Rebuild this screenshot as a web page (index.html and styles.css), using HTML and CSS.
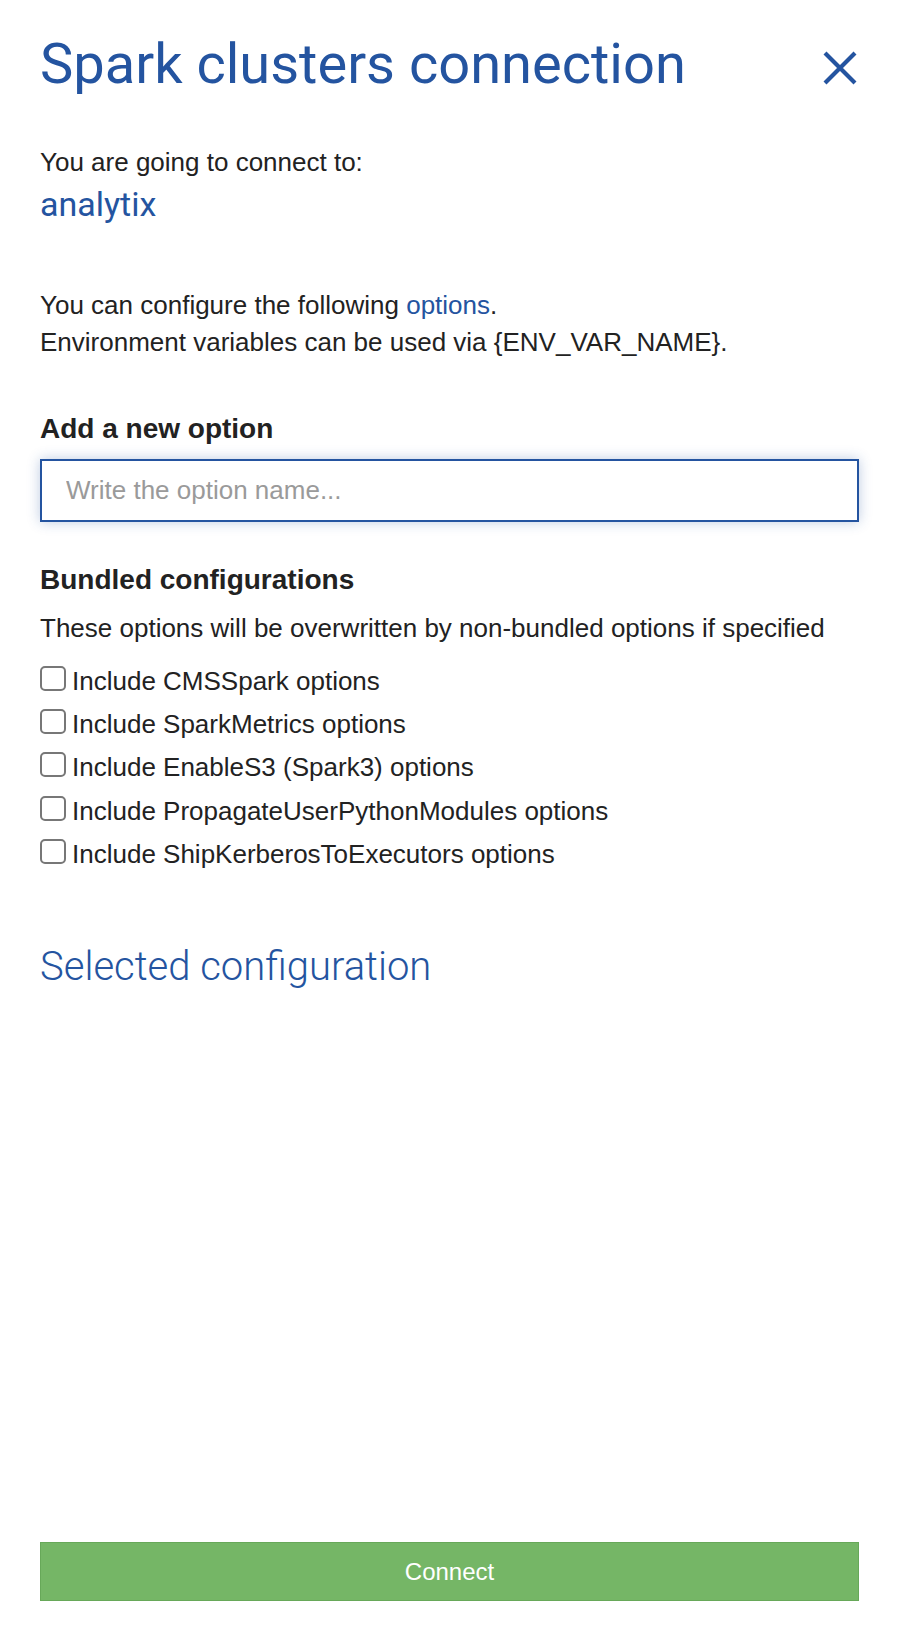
FILE: index.html
```html
<!DOCTYPE html>
<html lang="en">
<head>
<meta charset="utf-8">
<title>Spark clusters connection</title>
<link rel="stylesheet" href="styles.css">
</head>
<body>
<div class="page">
  <header class="header">
    <h1 class="title">Spark clusters connection</h1>
    <button class="close" aria-label="Close">
      <svg width="34" height="34" viewBox="0 0 34 34"><path d="M2 2 L32 32 M32 2 L2 32" stroke="#2454a0" stroke-width="4.2" fill="none"/></svg>
    </button>
  </header>

  <p class="text connect-to">You are going to connect to:</p>
  <div class="cluster">analytix</div>

  <p class="text intro">You can configure the following <a class="link" href="#">options</a>.<br>Environment variables can be used via {ENV_VAR_NAME}.</p>

  <h2 class="subhead">Add a new option</h2>
  <input class="option-input" type="text" placeholder="Write the option name...">

  <h2 class="subhead bundled">Bundled configurations</h2>
  <p class="text note">These options will be overwritten by non-bundled options if specified</p>

  <div class="checks">
    <label class="check"><span class="box"></span>Include CMSSpark options</label>
    <label class="check"><span class="box"></span>Include SparkMetrics options</label>
    <label class="check"><span class="box"></span>Include EnableS3 (Spark3) options</label>
    <label class="check"><span class="box"></span>Include PropagateUserPythonModules options</label>
    <label class="check"><span class="box"></span>Include ShipKerberosToExecutors options</label>
  </div>

  <h2 class="selected">Selected configuration</h2>

  <div class="spacer"></div>
  <button class="connect">Connect</button>
</div>
</body>
</html>
```

FILE: styles.css
```css
html, body {
  margin: 0;
  padding: 0;
  background: #ffffff;
}

body {
  font-family: "Liberation Sans", Arial, sans-serif;
  color: #222222;
}

.page {
  box-sizing: border-box;
  min-height: 1642px;
  padding: 0 41px 41px 40px;
  display: flex;
  flex-direction: column;
}

.header {
  display: flex;
  justify-content: space-between;
  align-items: flex-start;
}

.title {
  margin: 31px 0 0 0;
  font-family: Roboto, sans-serif;
  font-weight: 400;
  font-size: 56px;
  line-height: 66px;
  color: #2454a0;
}

.close {
  margin: 51px 2px 0 0;
  padding: 0;
  border: 0;
  background: none;
  width: 34px;
  height: 34px;
  display: flex;
}

.text {
  margin: 0;
  font-size: 26px;
  line-height: 36.4px;
}

.connect-to {
  margin-top: 47px;
}

.cluster {
  margin-top: 4px;
  font-family: Roboto, sans-serif;
  font-size: 34px;
  line-height: 40px;
  color: #2454a0;
}

.intro {
  margin-top: 63px;
}

.link {
  color: #2454a0;
  text-decoration: none;
}

.subhead {
  margin: 52px 0 0 0;
  font-size: 28px;
  font-weight: 700;
  line-height: 33.6px;
  color: #222222;
}

.option-input {
  box-sizing: border-box;
  margin-top: 13px;
  width: 100%;
  height: 63px;
  padding: 0 24px;
  border: 2px solid #2454a0;
  border-radius: 0;
  outline: none;
  font-family: "Liberation Sans", Arial, sans-serif;
  font-size: 26px;
  color: #222222;
  box-shadow: 0 0 12px rgba(36, 84, 160, 0.3);
}

.option-input::placeholder {
  color: #9a9a9a;
}

.bundled {
  margin-top: 41px;
}

.note {
  margin-top: 14px;
}

.checks {
  margin-top: 16px;
  display: flex;
  flex-direction: column;
  gap: 6.9px;
}

.check {
  display: flex;
  align-items: flex-start;
  font-size: 26px;
  line-height: 36.4px;
}

.box {
  box-sizing: border-box;
  flex: none;
  width: 26px;
  height: 25px;
  margin: 3px 6px 0 0;
  border: 2px solid #777777;
  border-radius: 5px;
  background: #ffffff;
}

.selected {
  margin: 71px 0 0 0;
  font-family: Roboto, sans-serif;
  font-weight: 300;
  font-size: 40px;
  line-height: 48px;
  color: #2454a0;
}

.spacer {
  flex: 1;
}

.connect {
  box-sizing: border-box;
  width: 100%;
  height: 59px;
  border: 1px solid #67a859;
  background: #75b666;
  color: #ffffff;
  font-family: "Liberation Sans", Arial, sans-serif;
  font-size: 24px;
  padding: 0;
}
```
